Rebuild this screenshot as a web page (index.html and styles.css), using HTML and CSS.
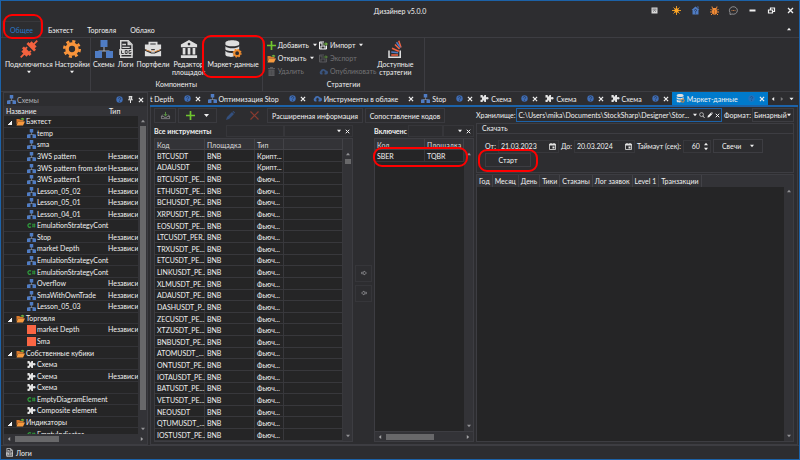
FILE: index.html
```html
<!DOCTYPE html>
<html lang="ru">
<head>
<meta charset="utf-8">
<title>Дизайнер v5.0.0</title>
<link rel="stylesheet" href="styles.css">
</head>
<body>
<svg class="sprite" aria-hidden="true">
  <symbol id="scheme" viewBox="0 0 18 18"><path d="M9 6v5M3.500 13v-2h11v2" fill="none" stroke="#a9b4c6"/><path fill="#4f7cc4" d="M5.500 0h7v7h-7zM0 11h7v7H0zM11 11h7v7h-7z"/></symbol>
  <symbol id="folder" viewBox="0 0 18 16"><path fill="#d9792b" d="M1 3h6l1 2h7v3H4l-3 6z"/><path fill="#f79a3e" d="M4 8h14l-4 8H1z"/><path fill="#6cae3e" d="M9 5c0-3 2-4 4-4V0l4 3-4 3V4c-2 0-3 0-4 1z"/></symbol>
  <symbol id="csharp" viewBox="0 0 18 12"><path d="M8 3.500a3.500 3.500 0 1 0 0 5" fill="none" stroke="#2f9a3c" stroke-width="2.400"/><path d="M12 2v8M15 2v8M10 4.500h7M10 7.500h7" stroke="#2f9a3c" stroke-width="1.500"/></symbol>
  <symbol id="puzzle" viewBox="0 0 18 16"><path fill="#e4e4e4" d="M1 1h4c1 0 0 2 1 3h1c2 0 1-3 2-3h3v4c1 1 2 0 3 0 3 0 3 5 0 5-1 0-2-1-3 0v5H9c-1 0 0-3-2-3H6c-1 1 0 3-1 3H1v-4c0-1 2 0 3-1V7C3 5 1 7 1 6z"/></symbol>
  <symbol id="help" viewBox="0 0 12 12"><circle cx="6" cy="6" r="5.500" fill="#3f6db5"/><path d="M4 4.500c0-2.500 4-2.500 4 0C8 6 6 6 6 7.500M6 8.500V10" fill="none" stroke="#25334d" stroke-width="1.300"/></symbol>
  <symbol id="close" viewBox="0 0 10 10"><path d="M1.500 1.500l7 7M8.500 1.500l-7 7" stroke="#f1f1f1" stroke-width="2"/></symbol>
  <symbol id="down" viewBox="0 0 10 10"><path d="M0 2h10L5 8z" fill="currentColor"/></symbol>
  <symbol id="up" viewBox="0 0 10 10"><path d="M0 8h10L5 2z" fill="currentColor"/></symbol>
  <symbol id="left" viewBox="0 0 10 10"><path d="M8 0v10L2 5z" fill="currentColor"/></symbol>
  <symbol id="right" viewBox="0 0 10 10"><path d="M2 0v10l6-5z" fill="currentColor"/></symbol>
  <symbol id="plus" viewBox="0 0 16 16"><path d="M8 0v16M0 8h16" stroke="#6fc62f" stroke-width="3"/></symbol>
  <symbol id="cloud" viewBox="0 0 18 14"><path fill="#4470b4" d="M4 13a4 4 0 0 1-1-7 6 6 0 0 1 11-1 4 4 0 0 1 0 8h-3V9h2L9 5 5 9h2v4z"/></symbol>
  <symbol id="log" viewBox="0 0 18 24"><path d="M2 1h10l5 5v17H2z" fill="none" stroke="#d5d5d5" stroke-width="2"/><path fill="#d5d5d5" d="M11 1v6h6zM4 5h5v2H4zM4 9h10v1.500H4zM0 12h18v8H0z"/><path d="M3 14v4h3M8 14h2.500v4H8zM16 14h-3v4h2.500v-2" fill="none" stroke="#2d2d30" stroke-width="1.200"/></symbol>
  <symbol id="db" viewBox="0 0 24 26"><path fill="#dedede" d="M1 4c0-5 20-5 20 0v2c0 4-20 4-20 0zM1 9c4 4 16 4 20 0v4c0 4-20 4-20 0zM1 16c3 3 8 3 12 3v5C8 25 1 24 1 21z"/><g fill="none" stroke="#f08c2e"><circle cx="18" cy="19" r="4" stroke-width="2.500"/><circle cx="18" cy="19" r="5.500" stroke-width="2" stroke-dasharray="2.200 2.120"/></g></symbol>
  <symbol id="disk" viewBox="0 0 18 18"><path d="M10 2H1v14h14V9M4 16v-6h8v6M4 2v4h5" fill="none" stroke="currentColor" stroke-width="2"/><path d="M9 5h4V2l5 4-5 4V7H9z" fill="#6cae3e"/></symbol>
  <symbol id="cal" viewBox="0 0 14 14"><path d="M1 2h12v11H1z" fill="none" stroke="#e4e4e4" stroke-width="1.600"/><path d="M1 2h12v3H1zM3 0h2v3H3zM9 0h2v3H9zM7 7h4v4H7z" fill="#e4e4e4"/></symbol>
</svg>

<div class="window">
  <header class="titlebar">
    <h1>Дизайнер v5.0.0</h1>
    <div class="title-icons">
      <button aria-label="Панель"><svg viewBox="0 0 14 14"><path d="M1 1h12v12H1z" fill="#d8d8d8"/><path d="M3 4h8M3 6h8M4 10l3-3 3 3" stroke="#45454a" fill="none"/></svg></button>
      <button class="sun" aria-label="Тема"><svg viewBox="0 0 18 18"><circle cx="9" cy="9" r="4.500" fill="#ffa726"/><path d="M9 0v18M0 9h18M3 3l12 12M15 3L3 15" stroke="#ffa726" stroke-width="1.700"/></svg></button>
      <button aria-label="Справка"><svg viewBox="0 0 18 18"><path d="M9 1l8 7h-2v9H3V8H1zM12 1h3v5z" fill="#4f7cc4"/><path d="M7 9c0-3 4-3 4 0 0 1-2 1-2 3M9 13v2" fill="none" stroke="#252f42" stroke-width="1.600"/></svg></button>
      <button aria-label="Ошибка"><svg viewBox="0 0 18 18"><ellipse cx="9" cy="11" rx="5" ry="6.500" fill="#f18b37"/><path d="M5 5l-1-4M13 5l1-4M5 5h8M4 9L1 6M4 12H0M5 15l-3 3M14 9l3-3M14 12h4M13 15l3 3" stroke="#f18b37" stroke-width="2"/><path d="M9 8v9" stroke="#8b4c1c"/></svg></button>
      <button aria-label="Чат"><svg viewBox="0 0 18 18"><path d="M2 17v-4a8 7.500 0 1 1 4 3z" fill="none" stroke="#a3a3a6" stroke-width="1.600"/><path d="M5 9h2M8 9h2M11 9h2" stroke="#c27b45" stroke-width="1.800"/></svg></button>
      <button aria-label="Свернуть"><svg viewBox="0 0 18 18"><path d="M3 9h12" stroke="#f1f1f1" stroke-width="4"/></svg></button>
      <button aria-label="Восстановить"><svg viewBox="0 0 18 18"><path d="M3 8h8v6H3zM7 8V4h8v7h-4" fill="none" stroke="#f1f1f1" stroke-width="2.400"/></svg></button>
      <button aria-label="Закрыть"><svg viewBox="0 0 18 18"><path d="M4 4l10 10M14 4L4 14" stroke="#f1f1f1" stroke-width="2.600"/></svg></button>
    </div>
  </header>

  <nav class="ribbon-tabs">
    <a href="#" class="selected">Общее<span class="ring ring-tab"></span></a>
    <a href="#">Бэктест</a>
    <a href="#">Торговля</a>
    <a href="#">Облако</a>
    <button class="collapse" aria-label="Свернуть ленту"><svg><use href="#up"/></svg></button>
  </nav>

  <section class="ribbon">
    <div class="group">
      <div class="group-items connect">
        <button class="big"><svg viewBox="0 0 20 20"><g fill="#f4623f" transform="rotate(-45 10 10)"><path d="M-3 9h5v2h-5zM2 6h3V4h3v12H5v-2H2zM8 6h2v2H8zM8 12h2v2H8zM12 4h3v2h3v8h-3v2h-3zM18 9h5v2h-5z"/></g></svg>Подключиться<svg class="tri"><use href="#down"/></svg></button>
        <button class="big"><svg viewBox="0 0 20 20"><g fill="none" stroke="#f9943b"><circle cx="10" cy="10" r="5.500" stroke-width="4"/><circle cx="10" cy="10" r="8.500" stroke-width="3" stroke-dasharray="3.340 3.340"/></g></svg>Настройки<svg class="tri"><use href="#down"/></svg></button>
      </div>
    </div>
    <div class="group">
      <div class="group-items components">
        <button class="big"><svg><use href="#scheme"/></svg>Схемы</button>
        <button class="big"><svg><use href="#log"/></svg>Логи</button>
        <button class="big"><svg viewBox="0 0 20 18"><path d="M6 5V2h8v3" fill="none" stroke="#dedede" stroke-width="2"/><path d="M1 4h18v5l-7 3V9H8v3L1 9zM1 11l7 3h4l7-3v6H1z" fill="#dedede"/><path d="M8 10h4v3H8z" fill="#dedede"/><path d="M2 10l6 2M18 10l-6 2M9 11h2" stroke="#e48b3b"/></svg>Портфели</button>
        <button class="big two"><svg viewBox="0 0 20 20"><path d="M10 0l9 5v3H1V5zM3 9h3v7H3zM8.500 9h3v7h-3zM14 9h3v7h-3zM1 17h18v3H1z" fill="#dedede"/><circle cx="10" cy="4.500" r="1.500" fill="#2d2d30"/></svg>Редактор площадок</button>
        <button class="big market"><svg><use href="#db"/></svg>Маркет-данные<span class="ring ring-market"></span></button>
      </div>
      <h2>Компоненты</h2>
    </div>
    <div class="group">
      <div class="group-items strategies">
        <div class="commands">
          <button><svg><use href="#plus"/></svg>Добавить<svg class="tri"><use href="#down"/></svg></button>
          <button><svg><use href="#folder"/></svg>Открыть<svg class="tri"><use href="#down"/></svg></button>
          <button disabled><svg viewBox="0 0 16 18"><path d="M1 2h4V0h6v2h4v2H1zM2 5h12v13H2z" fill="#77777a"/><path d="M5 7v9M8 7v9M11 7v9" stroke="#4a4a4d"/></svg>Удалить</button>
        </div>
        <div class="commands">
          <button><svg><use href="#disk"/></svg>Импорт<svg class="tri"><use href="#down"/></svg></button>
          <button disabled><svg><use href="#disk"/></svg>Экспорт</button>
          <button disabled><svg><use href="#cloud"/></svg>Опубликовать</button>
        </div>
        <button class="big two"><svg viewBox="0 0 20 24"><path d="M2 14v9h15v-9" fill="none" stroke="#dedede" stroke-width="2"/><path d="M5 20h9M10 6l6 6M15 1l3 9" stroke="#f4623f" stroke-width="2"/><path d="M5 16l9 1M12 3l5 7" stroke="#4f7cc4" stroke-width="2"/><path d="M6 11l9 4" stroke="#f4623f" stroke-width="2"/></svg>Доступные стратегии</button>
      </div>
      <h2>Стратегии</h2>
    </div>
  </section>

  <main class="workspace">
    <aside class="schemes">
      <header class="panel-head"><svg><use href="#scheme"/></svg><span>Схемы</span><i class="grip"></i><svg class="q"><use href="#help"/></svg><svg class="q" viewBox="0 0 10 12"><path d="M2 1h6M3 1v5M7 1v5M1 6.500h8M5 7v5" stroke="#f1f1f1" stroke-width="1.600"/><path d="M5 1h2v5H5z" fill="#f1f1f1"/></svg><svg class="x"><use href="#close"/></svg></header>
      <div class="tree-box">
        <div class="tree-view">
        <table class="tree">
          <colgroup><col><col class="type-col"></colgroup>
          <thead><tr><th>Название</th><th>Тип</th></tr></thead>
          <tbody>
            <tr class="branch"><td colspan="2"><svg><use href="#folder"/></svg>Бэктест</td></tr>
            <tr><td><svg><use href="#scheme"/></svg>temp</td><td></td></tr>
            <tr><td><svg><use href="#scheme"/></svg>sma</td><td></td></tr>
            <tr><td><svg><use href="#scheme"/></svg>3WS pattern</td><td>Независи</td></tr>
            <tr><td><svg><use href="#scheme"/></svg>3WS pattern from store</td><td>Независи</td></tr>
            <tr><td><svg><use href="#scheme"/></svg>3WS pattern1</td><td>Независи</td></tr>
            <tr><td><svg><use href="#scheme"/></svg>Lesson_05_02</td><td>Независи</td></tr>
            <tr><td><svg><use href="#scheme"/></svg>Lesson_05_01</td><td>Независи</td></tr>
            <tr><td><svg><use href="#scheme"/></svg>Lesson_04_01</td><td>Независи</td></tr>
            <tr><td><svg><use href="#csharp"/></svg>EmulationStrategyCont</td><td></td></tr>
            <tr><td><svg><use href="#scheme"/></svg>Stop</td><td>Независи</td></tr>
            <tr><td><svg><use href="#scheme"/></svg>market Depth</td><td>Независи</td></tr>
            <tr><td><svg><use href="#scheme"/></svg>EmulationStrategyCont</td><td></td></tr>
            <tr><td><svg><use href="#csharp"/></svg>EmulationStrategyCont</td><td></td></tr>
            <tr><td><svg><use href="#scheme"/></svg>Overflow</td><td>Независи</td></tr>
            <tr><td><svg><use href="#scheme"/></svg>SmaWithOwnTrade</td><td>Независи</td></tr>
            <tr><td><svg><use href="#scheme"/></svg>Lesson_05_03</td><td>Независи</td></tr>
            <tr class="branch"><td colspan="2"><svg><use href="#folder"/></svg>Торговля</td></tr>
            <tr><td><i class="square"></i>market Depth</td><td>Независи</td></tr>
            <tr><td><i class="square"></i>Sma</td><td></td></tr>
            <tr class="branch"><td colspan="2"><svg><use href="#folder"/></svg>Собственные кубики</td></tr>
            <tr><td><svg><use href="#puzzle"/></svg>Схема</td><td></td></tr>
            <tr><td><svg><use href="#puzzle"/></svg>Схема</td><td>Независи</td></tr>
            <tr><td><svg><use href="#puzzle"/></svg>Схема</td><td></td></tr>
            <tr><td><svg><use href="#csharp"/></svg>EmptyDiagramElement</td><td></td></tr>
            <tr><td><svg><use href="#puzzle"/></svg>Composite element</td><td></td></tr>
            <tr class="branch"><td colspan="2"><svg><use href="#folder"/></svg>Индикаторы</td></tr>
            <tr><td><svg><use href="#csharp"/></svg>EmptyIndicator</td><td></td></tr>
          </tbody>
        </table>
        </div>
        <div class="vscroll"><svg><use href="#up"/></svg><i class="thumb long"></i><svg><use href="#down"/></svg></div>
      </div>
      <div class="hscroll"><svg><use href="#left"/></svg><i class="thumb"></i><svg><use href="#right"/></svg></div>
    </aside>

    <div class="documents">
      <nav class="doc-tabs">
        <a href="#" class="cut"><span>t Depth</span><svg class="q"><use href="#help"/></svg><svg class="x"><use href="#close"/></svg></a>
        <a href="#"><svg><use href="#scheme"/></svg><span>Оптимизация Stop</span><svg class="q"><use href="#help"/></svg><svg class="x"><use href="#close"/></svg></a>
        <a href="#"><svg><use href="#cloud"/></svg><span>Инструменты в облаке</span><svg class="x"><use href="#close"/></svg></a>
        <a href="#"><svg><use href="#scheme"/></svg><span>Stop</span><svg class="q"><use href="#help"/></svg><svg class="x"><use href="#close"/></svg></a>
        <a href="#"><svg><use href="#puzzle"/></svg><span>Схема</span><svg class="q"><use href="#help"/></svg><svg class="x"><use href="#close"/></svg></a>
        <a href="#"><svg><use href="#puzzle"/></svg><span>Схема</span><svg class="q"><use href="#help"/></svg><svg class="x"><use href="#close"/></svg></a>
        <a href="#"><svg><use href="#puzzle"/></svg><span>Схема</span><svg class="q"><use href="#help"/></svg><svg class="x"><use href="#close"/></svg></a>
        <a href="#" class="active"><svg><use href="#db"/></svg><span>Маркет-данные</span><svg class="q"><use href="#help"/></svg><svg class="x"><use href="#close"/></svg></a>
        <div class="tab-nav"><svg><use href="#left"/></svg><svg class="dim"><use href="#right"/></svg><svg><use href="#down"/></svg></div>
      </nav>

      <div class="page">
        <section class="securities">
          <div class="toolbar">
            <button class="tool" aria-label="Сохранить"><svg viewBox="0 0 20 16"><path d="M4 6L1 10v5h18v-5l-3-4M1 10h5l1 2h6l1-2h5" fill="none" stroke="#aaa" stroke-width="1.400"/><path d="M10 0v8M7 5l3 4 3-4" fill="none" stroke="#5e9c45" stroke-width="2"/></svg></button>
            <button class="tool add" aria-label="Добавить"><svg><use href="#plus"/></svg><svg class="tri"><use href="#down"/></svg></button>
            <button class="tool" aria-label="Изменить" disabled><svg viewBox="0 0 18 18"><path d="M0 18l2-6L12 2l4 4L6 16zM13 1l2-1 3 3-1 2z" fill="#334f7d"/></svg></button>
            <button class="tool" aria-label="Удалить" disabled><svg viewBox="0 0 18 18"><path d="M1 1l16 16M17 1L1 17" stroke="#8a3b30" stroke-width="2.400"/></svg></button>
            <button class="tool info">Расширенная информация</button>
            <button class="tool codes">Сопоставление кодов</button>
          </div>
          <div class="lists">
            <section class="list all">
              <div class="list-head"><h3>Все инструменты</h3><input aria-label="Поиск инструмента"><div class="filter"><svg class="tri"><use href="#down"/></svg><svg class="x"><use href="#close"/></svg></div></div>
              <div class="list-body">
                <table class="grid">
                  <colgroup><col class="c50"><col class="c50"><col class="c28"><col></colgroup>
                  <thead><tr><th>Код</th><th>Площадка</th><th>Тип</th><th></th></tr></thead>
                  <tbody>
                    <tr><td>BTCUSDT</td><td>BNB</td><td>Крипт...</td><td></td></tr>
                    <tr><td>ADAUSDT</td><td>BNB</td><td>Крипт...</td><td></td></tr>
                    <tr><td>BTCUSDT_PE...</td><td>BNB</td><td>Фьюч...</td><td></td></tr>
                    <tr><td>ETHUSDT_PE...</td><td>BNB</td><td>Фьюч...</td><td></td></tr>
                    <tr><td>BCHUSDT_PE...</td><td>BNB</td><td>Фьюч...</td><td></td></tr>
                    <tr><td>XRPUSDT_PE...</td><td>BNB</td><td>Фьюч...</td><td></td></tr>
                    <tr><td>EOSUSDT_PE...</td><td>BNB</td><td>Фьюч...</td><td></td></tr>
                    <tr><td>LTCUSDT_PER...</td><td>BNB</td><td>Фьюч...</td><td></td></tr>
                    <tr><td>TRXUSDT_PE...</td><td>BNB</td><td>Фьюч...</td><td></td></tr>
                    <tr><td>ETCUSDT_PE...</td><td>BNB</td><td>Фьюч...</td><td></td></tr>
                    <tr><td>LINKUSDT_PE...</td><td>BNB</td><td>Фьюч...</td><td></td></tr>
                    <tr><td>XLMUSDT_PE...</td><td>BNB</td><td>Фьюч...</td><td></td></tr>
                    <tr><td>ADAUSDT_PE...</td><td>BNB</td><td>Фьюч...</td><td></td></tr>
                    <tr><td>DASHUSDT_P...</td><td>BNB</td><td>Фьюч...</td><td></td></tr>
                    <tr><td>ZECUSDT_PE...</td><td>BNB</td><td>Фьюч...</td><td></td></tr>
                    <tr><td>XTZUSDT_PE...</td><td>BNB</td><td>Фьюч...</td><td></td></tr>
                    <tr><td>BNBUSDT_PE...</td><td>BNB</td><td>Фьюч...</td><td></td></tr>
                    <tr><td>ATOMUSDT_...</td><td>BNB</td><td>Фьюч...</td><td></td></tr>
                    <tr><td>ONTUSDT_PE...</td><td>BNB</td><td>Фьюч...</td><td></td></tr>
                    <tr><td>IOTAUSDT_PE...</td><td>BNB</td><td>Фьюч...</td><td></td></tr>
                    <tr><td>BATUSDT_PE...</td><td>BNB</td><td>Фьюч...</td><td></td></tr>
                    <tr><td>VETUSDT_PE...</td><td>BNB</td><td>Фьюч...</td><td></td></tr>
                    <tr><td>NEOUSDT</td><td>BNB</td><td>Фьюч...</td><td></td></tr>
                    <tr><td>QTUMUSDT_...</td><td>BNB</td><td>Фьюч...</td><td></td></tr>
                    <tr><td>IOSTUSDT_PE...</td><td>BNB</td><td>Фьюч...</td><td></td></tr>
                  </tbody>
                </table>
                <div class="vscroll wide"><svg><use href="#up"/></svg><i class="thumb"></i><svg><use href="#down"/></svg></div>
              </div>
            </section>
            <div class="movers">
              <button aria-label="Включить"><svg viewBox="0 0 12 10"><path d="M1 3.500h5V1l5 4-5 4V6.500H1z" fill="none" stroke="#8d8d90" stroke-width="1.500"/></svg></button>
              <button aria-label="Исключить"><svg viewBox="0 0 12 10"><path d="M11 3.500H6V1L1 5l5 4V6.500h5z" fill="none" stroke="#8d8d90" stroke-width="1.500"/></svg></button>
            </div>
            <section class="list included">
              <div class="list-head"><h3>Включенс</h3><input aria-label="Поиск включенных"><div class="filter"><svg class="tri"><use href="#down"/></svg><svg class="x"><use href="#close"/></svg></div></div>
              <div class="list-body">
                <div class="list-main">
                  <table class="grid short">
                    <colgroup><col class="c50"><col></colgroup>
                    <thead><tr><th>Код</th><th>Площадка</th></tr></thead>
                    <tbody><tr><td>SBER</td><td>TQBR</td></tr></tbody>
                  </table>
                  <span class="ring ring-row"></span>
                </div>
                <div class="vscroll wide"><svg><use href="#up"/></svg><i></i><svg><use href="#down"/></svg></div>
              </div>
              <div class="hscroll"><svg><use href="#left"/></svg><i class="thumb"></i><svg><use href="#right"/></svg></div>
            </section>
          </div>
        </section>

        <section class="storage">
          <div class="storage-row">
            <label for="path">Хранилище:</label>
            <div class="path"><input id="path" value="C:\Users\mika\Documents\StockSharp\Designer\Stor..."><svg class="tri"><use href="#down"/></svg><svg viewBox="0 0 14 14"><circle cx="6" cy="6" r="4.500" fill="none" stroke="#ddd" stroke-width="1.600"/><path d="M9 9l4 5" stroke="#ddd" stroke-width="2"/></svg><svg viewBox="0 0 14 14"><path d="M1 13l1-4 7-7 3 3-7 7zM10 1l1-1 3 3-1 1z" fill="#f1f1f1"/></svg><svg class="x"><use href="#close"/></svg></div>
            <label for="format">Формат:</label>
            <div class="select format"><select id="format"><option>Бинарный</option></select><svg class="tri"><use href="#down"/></svg></div>
          </div>
          <div class="download">
            <h3>Скачать</h3>
            <div class="params">
              <label for="from">От:</label>
              <div class="field date"><input id="from" value="21.03.2023"><svg><use href="#cal"/></svg></div>
              <label for="to">До:</label>
              <div class="field date"><input id="to" value="20.03.2024"><svg><use href="#cal"/></svg></div>
              <label for="timeout">Таймаут (сек):</label>
              <div class="field spin"><input id="timeout" value="60"><div><svg><use href="#up"/></svg><svg><use href="#down"/></svg></div></div>
              <div class="select candles"><select aria-label="Тип данных"><option>Свечи</option></select><svg class="tri"><use href="#down"/></svg></div>
            </div>
            <button class="start">Старт<span class="ring ring-start"></span></button>
          </div>
          <div class="results">
            <div class="results-main">
              <table class="result-grid"><thead><tr><th>Год</th><th>Месяц</th><th>День</th><th>Тики</th><th>Стаканы</th><th>Лог заявок</th><th>Level 1</th><th>Транзакции</th><th class="rest"></th></tr></thead></table>
            </div>
            <div class="vscroll wide"><svg><use href="#up"/></svg><i></i><svg><use href="#down"/></svg></div>
          </div>
        </section>
      </div>
    </div>
  </main>

  <footer class="status"><button><svg><use href="#log"/></svg>Логи</button></footer>
</div>
</body>
</html>
```
FILE: styles.css
```css
:root {
  --bg: #2d2d30;
  --dark: #252526;
  --raised: #333337;
  --line: #3d3d42;
  --text: #f1f1f1;
  --accent: #1c62a8;
}

* { box-sizing: border-box; }

body {
  margin: 0;
  background: var(--bg);
  color: var(--text);
  font: 7px/10px Lato, Roboto, sans-serif;
}

h1, h2, h3 { margin: 0; font-size: 7px; font-weight: 400; }
a { color: inherit; text-decoration: none; }
button, input, select { font: inherit; color: inherit; background: none; border: 0; padding: 0; margin: 0; border-radius: 0; min-width: 0; }
select { appearance: none; }
svg { display: block; flex: none; overflow: visible; width: 9px; height: 9px; }
.sprite { position: absolute; width: 0; height: 0; }
svg.tri { width: 5px; height: 5px; }
svg.x { width: 6px; height: 6px; }
svg.q { width: 7px; height: 7px; }

.ring { position: absolute; border: 2px solid #f00; border-radius: 9px; pointer-events: none; z-index: 5; }

.window {
  height: 100vh;
  display: flex;
  flex-direction: column;
  border: 1px solid var(--accent);
}

.titlebar { position: relative; height: 20px; display: flex; align-items: center; justify-content: center; }
.title-icons { position: absolute; right: 3px; top: 3px; display: flex; gap: 7px; }
.title-icons button { width: 12px; height: 12px; display: grid; place-items: center; }
.title-icons svg { width: 9px; height: 9px; }
.title-icons button:first-child svg { width: 7px; height: 7px; }
.title-icons .sun { margin-left: 3px; }

.ribbon-tabs { display: flex; height: 17px; line-height: 18px; padding-left: 1px; border-bottom: 1px solid var(--line); }
.ribbon-tabs a { padding: 0 7px; }
.ribbon-tabs .selected { position: relative; color: #2a78c8; border: 1px solid #38383c; border-bottom: 0; line-height: 16px; }
.ribbon-tabs .collapse { margin-left: auto; padding-right: 8px; display: flex; align-items: center; }
.collapse svg { width: 4px; height: 4px; }
.ring-tab { inset: -8px -3px -2px 0; }

.ribbon { display: flex; height: 53px; }
.group { display: flex; flex-direction: column; border-right: 1px solid var(--line); }
.group-items { display: flex; flex: 1; padding-top: 2px; }
.group h2 { text-align: center; line-height: 13px; }
.big { display: flex; flex-direction: column; align-items: center; line-height: 8px; white-space: nowrap; gap: 2px; align-self: flex-start; }
.big > svg { width: 18px; height: 18px; }
.big > svg.tri { width: 4px; height: 4px; }
.two { white-space: normal; width: 34px; }
.connect { gap: 2px; padding-left: 4px; }
.components { gap: 2px; padding-left: 2px; padding-right: 3px; }
.market { position: relative; }
.ring-market { inset: -5px -6px -10px; }
.strategies { gap: 2px; padding-left: 4px; padding-right: 12px; }
.commands { display: flex; flex-direction: column; gap: 3px; }
.commands button { display: flex; align-items: center; gap: 2px; height: 10px; white-space: nowrap; }
.commands svg.tri { width: 4px; height: 4px; margin-left: 2px; }
.commands button:disabled { color: #737376; }
.commands button:disabled svg { opacity: .6; }

.workspace { flex: 1; min-height: 0; display: flex; padding: 0 1px 0 2px; gap: 2px; border-top: 1px solid var(--line); }

.schemes { width: 145px; display: flex; flex-direction: column; border: 1px solid var(--line); }
.panel-head { display: flex; align-items: center; height: 13px; gap: 4px; padding: 0 3px; color: #b4b4b8; }
.panel-head > svg:first-child { margin-right: -3px; }
.grip { flex: 1; height: 4px; margin-right: 3px; background: radial-gradient(#515156 30%, transparent 40%) 0 0 / 2px 2px; }
.tree-box { flex: 1; min-height: 0; display: flex; }
.tree-view { flex: 1; min-width: 0; overflow: hidden; background: var(--dark); }
.tree { width: 100%; height: calc(100% + 6px); border-collapse: collapse; table-layout: fixed; }
.type-col { width: 31px; }
.tree th, .tree td { padding: 0; text-align: left; font-weight: 400; line-height: 9px; white-space: nowrap; overflow: hidden; }
.tree th { height: 10px; background: var(--raised); padding-left: 2px; }
.tree td { padding-left: 33px; box-shadow: inset 0 -1px #333337; }
.tree td:has(+ td:empty) { overflow: visible; }
.tree td + td { padding-left: 1px; }
.tree .branch td { padding-left: 22px; background: linear-gradient(135deg, transparent 50%, #f1f1f1 50%) 4px 5px / 4px 4px no-repeat; }
.tree td svg, .square { margin-left: -10px; margin-right: 1px; float: left; width: 9px; height: 9px; }
.square { background: #fa6644; }

.vscroll { display: flex; flex-direction: column; align-items: center; flex: none; width: 9px; padding: 3px 0; gap: 3px; background: var(--raised); color: #929295; }
.vscroll svg, .hscroll svg { width: 4px; height: 4px; }
.vscroll svg:last-child { margin-top: auto; }
.thumb { background: #68686a; }
.vscroll .thumb { width: 6px; height: 5px; }
.vscroll .long { height: 91%; }
.hscroll { display: flex; align-items: center; height: 10px; padding: 0 3px; gap: 4px; background: var(--raised); color: #a2a2a5; }
.hscroll svg:last-child { margin-left: auto; }
.hscroll .thumb { width: 44px; height: 6px; }
.tree-box .vscroll { padding-top: 13px; }

.documents { flex: 1; min-width: 0; display: flex; flex-direction: column; }
.doc-tabs { display: flex; height: 15px; border-bottom: 2px solid var(--accent); white-space: nowrap; overflow: hidden; }
.doc-tabs a { display: flex; align-items: center; gap: 4px; padding: 0 3px 0 4px; }
.doc-tabs a span { flex: 1; margin-left: -2px; padding-right: 6px; }
.doc-tabs .cut { padding-left: 2px; }
.doc-tabs .active { background: #007acc; }
.active .q { opacity: .6; }
.tab-nav { display: flex; align-items: center; margin-left: auto; gap: 5px; padding-right: 4px; }
.tab-nav svg { width: 4px; height: 4px; }
.tab-nav svg:last-child { width: 5px; }
.tab-nav .dim { opacity: .4; }

.page { flex: 1; min-height: 0; display: flex; gap: 2px; padding: 1px 3px 2px; border: 1px solid var(--line); border-top: 0; }
.securities { flex: none; width: 320px; display: flex; flex-direction: column; }
.toolbar { display: flex; gap: 2px; height: 15px; }
.tool { width: 22px; display: flex; align-items: center; justify-content: center; gap: 9px; border: 1px solid #3a3a3f; }
.tool.add { width: 39px; }
.tool.info { flex: none; width: 96px; }
.tool.codes { width: 80px; }
.tool:disabled { border-color: transparent; }
.lists { flex: 1; min-height: 0; display: flex; margin-top: 1px; }
.list { display: flex; flex-direction: column; min-width: 0; }
.all { flex: none; width: 199px; }
.included { flex: 1; }
.list-head { display: flex; height: 14px; align-items: center; }
.list-head h3 { flex: none; width: 72px; font-weight: 700; white-space: nowrap; overflow: hidden; }
.list-head input { flex: 1; width: 0; height: 12px; border: 1px solid #36363a; }
.filter { width: 69px; height: 12px; border: 1px solid #36363a; display: flex; align-items: center; justify-content: flex-end; gap: 4px; padding-right: 2px; }
.filter svg.tri { width: 4px; height: 4px; }
.filter svg.x { width: 5px; height: 5px; }
.list.included h3 { width: 34px; }
.included .filter { width: 31px; }
.list-body { flex: 1; min-height: 0; display: flex; border: 1px solid var(--line); background: var(--dark); }
.list-main { flex: 1; min-width: 0; position: relative; }
.grid { flex: 1; width: 100%; height: 100%; border-collapse: collapse; table-layout: fixed; }
.grid.short { height: auto; }
.c50 { width: 50px; }
.c28 { width: 29px; }
.grid th, .grid td { padding: 0 0 0 2px; text-align: left; font-weight: 400; line-height: 10px; white-space: nowrap; overflow: hidden; box-shadow: inset -1px -1px #38383c; }
.grid th { height: 11px; background: var(--raised); color: #dcdcdc; box-shadow: inset -1px -1px #424247; }
.grid.short td { height: 12px; }
.list-body .vscroll { padding-top: 13px; }
.ring-row { left: -2px; right: -4px; top: 8px; height: 20px; }
.included .hscroll { border: 1px solid var(--line); border-top: 0; }
.included .hscroll .thumb { width: 48px; }

.movers { flex: none; width: 21px; display: flex; flex-direction: column; align-items: center; justify-content: center; gap: 3px; }
.movers button { width: 17px; height: 17px; display: grid; place-items: center; border: 1px solid #36363a; }
.movers svg { width: 6px; height: 6px; }

.storage { flex: 1; min-width: 0; display: flex; flex-direction: column; }
.storage-row { display: flex; align-items: center; height: 14px; gap: 1px; white-space: nowrap; }
.path { flex: 1; min-width: 0; height: 14px; display: flex; align-items: center; gap: 2px; padding: 0 1px; border: 1px solid var(--accent); margin-right: 1px; }
.path input { flex: 1; }
.path svg { width: 6px; height: 6px; }
.path svg.tri { width: 4px; height: 4px; }
.path svg.x { width: 5px; height: 5px; }
.select { display: flex; align-items: center; height: 14px; padding: 0 3px; border: 1px solid var(--line); }
.select select { flex: 1; }
.select svg.tri { width: 4px; height: 4px; pointer-events: none; }
.format { width: 42px; padding: 0 2px 0 1px; }
.download { margin-top: 1px; height: 50px; border: 1px solid var(--line); }
.download h3 { line-height: 9px; padding-left: 5px; border-bottom: 1px solid var(--line); }
.params { display: flex; align-items: center; gap: 2px; padding: 5px 8px 0; white-space: nowrap; }
.field { display: flex; align-items: center; height: 13px; padding: 0 2px; border: 1px solid #38383c; }
.field input { flex: 1; width: 100%; }
.date { width: 61px; }
.date svg { width: 7px; height: 7px; }
.spin { width: 28px; }
.spin input { text-align: right; padding-right: 4px; }
.spin svg { width: 4px; height: 4px; }
.spin div { display: grid; gap: 1px; }
.candles { width: 50px; padding: 0 8px; }
.start { position: relative; display: block; width: 46px; height: 14px; margin-left: 8px; border: 1px solid var(--line); }
.ring-start { inset: -5px -8px -6px; }
.results { flex: 1; min-height: 0; margin-top: 1px; display: flex; border: 1px solid var(--line); background: var(--dark); }
.results-main { flex: 1; min-width: 0; }
.result-grid { width: 100%; border-collapse: collapse; }
.result-grid th { padding: 0 2px; height: 12px; font-weight: 400; white-space: nowrap; background: var(--raised); border-right: 1px solid #424247; text-align: left; }
.result-grid .rest { width: 100%; border-right: 0; }
.results .vscroll { padding-top: 14px; }

.status { height: 14px; padding-left: 4px; border-top: 1px solid var(--line); display: flex; align-items: center; }
.status button { display: flex; align-items: center; gap: 2px; font-size: 7px; }
```
